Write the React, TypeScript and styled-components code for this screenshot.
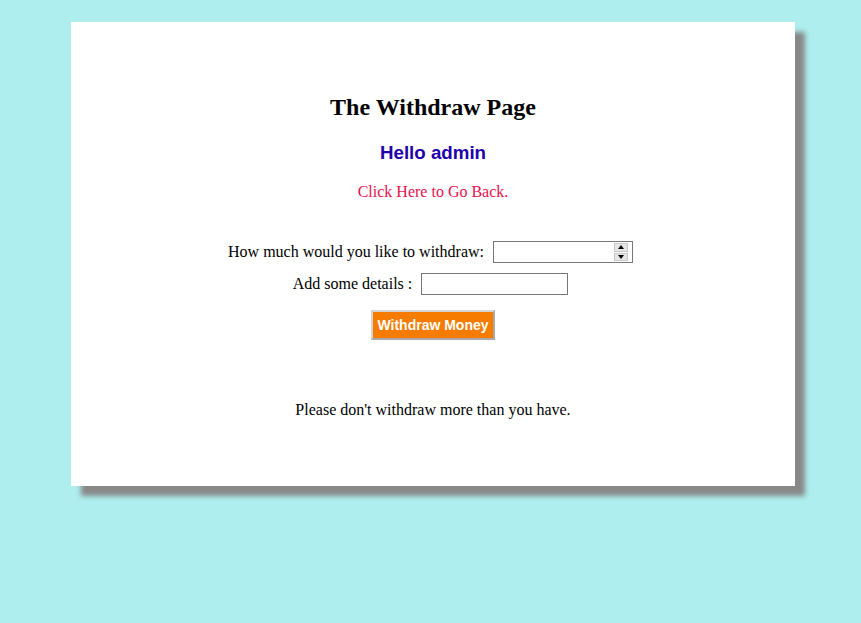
import React from "react";
import styled, { createGlobalStyle } from "styled-components";

const GlobalStyle = createGlobalStyle`
  html, body {
    margin: 0;
    padding: 0;
    background: #afeeee;
  }
  body {
    font-family: "Liberation Serif", "Times New Roman", serif;
    font-size: 16px;
    color: #000;
  }
`;

const Page = styled.div`
  padding: 22px 0 40px 71px;
`;

const Card = styled.main`
  width: 724px;
  box-sizing: border-box;
  background: #fff;
  box-shadow: 10px 10px 5px #888;
  padding: 71px 0 67px;
  display: flex;
  flex-direction: column;
  align-items: center;
`;

const Title = styled.h2`
  margin: 0;
  font-family: "Liberation Serif", "Times New Roman", serif;
  font-size: 24px;
  line-height: 28px;
  font-weight: bold;
`;

const Greeting = styled.h3`
  margin: 21px 0 0;
  font-family: "Liberation Sans", Arial, sans-serif;
  font-size: 18.72px;
  line-height: 22px;
  font-weight: bold;
  color: #2200aa;
`;

const BackLink = styled.a`
  margin-top: 19px;
  font-size: 16px;
  line-height: 18px;
  color: #e8114f;
  text-decoration: none;
  cursor: pointer;
`;

const Form = styled.form`
  margin-top: 40px;
  display: flex;
  flex-direction: column;
  align-items: center;
`;

const Row = styled.div<{ $top: number }>`
  margin-top: ${(p) => p.$top}px;
  display: flex;
  align-items: center;
  gap: 9px;
  padding-right: 5px;
`;

const Label = styled.label`
  font-size: 16px;
  line-height: 18px;
  white-space: nowrap;
`;

const NumberBox = styled.div`
  width: 140px;
  height: 22px;
  box-sizing: border-box;
  border: 1px solid #767676;
  display: flex;
  align-items: center;
  background: #fff;
`;

const BareInput = styled.input`
  flex: 1;
  min-width: 0;
  height: 100%;
  border: none;
  outline: none;
  padding: 0 2px;
  font-family: "Liberation Sans", Arial, sans-serif;
  font-size: 13px;
  background: transparent;
`;

const Spinner = styled.div`
  width: 14px;
  height: 18px;
  margin-right: 4px;
  display: flex;
  flex-direction: column;
  gap: 1px;
  background: #fff;
`;

const SpinButton = styled.div`
  flex: 1;
  display: flex;
  align-items: center;
  justify-content: center;
  background: #e6e6e6;
  border: 1px solid #c8c8c8;
  box-sizing: border-box;
`;

const Arrow = styled.span<{ $up: boolean }>`
  width: 0;
  height: 0;
  border-left: 3px solid transparent;
  border-right: 3px solid transparent;
  ${(p) => (p.$up ? "border-bottom: 4px solid #000;" : "border-top: 4px solid #000;")}
`;

const TextInput = styled.input`
  width: 147px;
  height: 22px;
  box-sizing: border-box;
  border: 1px solid #767676;
  padding: 0 2px;
  font-family: "Liberation Sans", Arial, sans-serif;
  font-size: 13px;
  outline: none;
`;

const SubmitButton = styled.button`
  margin-top: 15px;
  box-sizing: border-box;
  height: 30px;
  width: 124px;
  padding: 0;
  background: #f57c00;
  color: #fff;
  font-family: "Liberation Sans", Arial, sans-serif;
  font-size: 14px;
  font-weight: bold;
  line-height: 16px;
  border: 2px solid;
  border-color: #d4d4d4 #a9a9a9 #a9a9a9 #d4d4d4;
  cursor: pointer;
`;

const Note = styled.p`
  margin: 61px 0 0;
  font-size: 16px;
  line-height: 18px;
`;

export default function App() {
  return (
    <>
      <GlobalStyle />
      <Page>
        <Card>
          <Title>The Withdraw Page</Title>
          <Greeting>Hello admin</Greeting>
          <BackLink>Click Here to Go Back.</BackLink>
          <Form onSubmit={(e) => e.preventDefault()}>
            <Row $top={0}>
              <Label htmlFor="amount">How much would you like to withdraw:</Label>
              <NumberBox>
                <BareInput id="amount" type="text" inputMode="numeric" />
                <Spinner>
                  <SpinButton>
                    <Arrow $up={true} />
                  </SpinButton>
                  <SpinButton>
                    <Arrow $up={false} />
                  </SpinButton>
                </Spinner>
              </NumberBox>
            </Row>
            <Row $top={10}>
              <Label htmlFor="details">Add some details :</Label>
              <TextInput id="details" type="text" />
            </Row>
            <SubmitButton type="submit">Withdraw Money</SubmitButton>
          </Form>
          <Note>Please don't withdraw more than you have.</Note>
        </Card>
      </Page>
    </>
  );
}
